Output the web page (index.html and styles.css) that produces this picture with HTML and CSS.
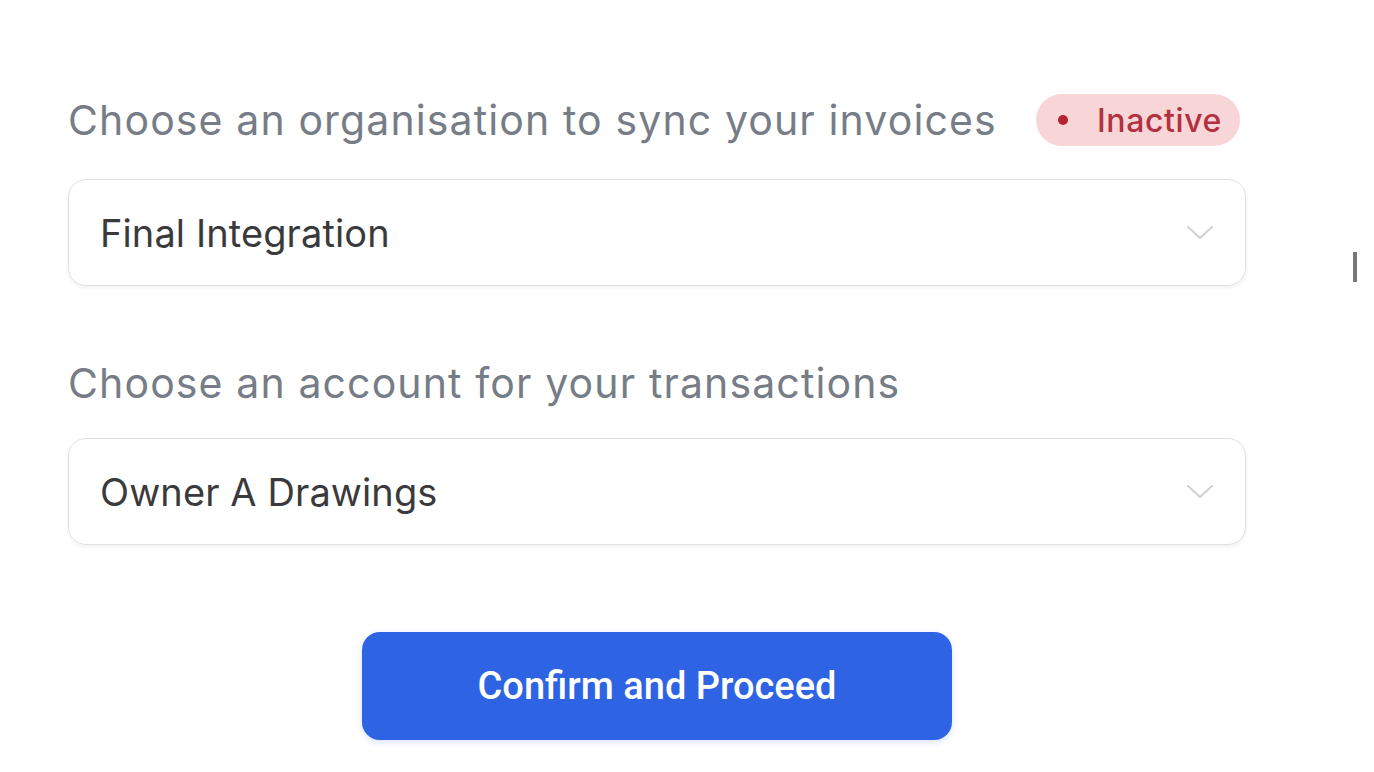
FILE: index.html
```html
<!DOCTYPE html>
<html>
<head>
<meta charset="utf-8">
<link rel="stylesheet" href="styles.css">
</head>
<body>
<div class="page">
  <div class="form">
    <div class="label-row">
      <span class="label">Choose an organisation to sync your invoices</span>
      <span class="badge"><span class="dot"></span>Inactive</span>
    </div>
    <div class="select">
      <span class="value">Final Integration</span>
      <svg class="chev" width="30" height="18" viewBox="0 0 30 18"><path d="M3 3 L15 14 L27 3" fill="none" stroke="#d2d2d6" stroke-width="2.2" stroke-linecap="round" stroke-linejoin="round"/></svg>
    </div>
    <div class="label-row second">
      <span class="label">Choose an account for your transactions</span>
    </div>
    <div class="select">
      <span class="value">Owner A Drawings</span>
      <svg class="chev" width="30" height="18" viewBox="0 0 30 18"><path d="M3 3 L15 14 L27 3" fill="none" stroke="#d2d2d6" stroke-width="2.2" stroke-linecap="round" stroke-linejoin="round"/></svg>
    </div>
    <div class="actions">
      <button class="btn">Confirm and Proceed</button>
    </div>
  </div>
  <div class="caret"></div>
</div>
</body>
</html>
```
FILE: styles.css
```css
html, body {
  margin: 0;
  padding: 0;
  background: #ffffff;
}
.page {
  position: relative;
  width: 1374px;
  height: 772px;
  overflow: hidden;
  font-family: Inter, "Noto Sans", sans-serif;
}
.form {
  width: 1178px;
  padding: 94px 0 0 68px;
  display: flex;
  flex-direction: column;
}
.label-row {
  display: flex;
  align-items: center;
  justify-content: space-between;
  height: 52px;
  padding-right: 6px;
}
.label-row.second {
  margin-top: 74px;
  height: 46px;
}
.label {
  font-size: 41px;
  color: #767d86;
  letter-spacing: 1.12px;
}
.badge {
  display: flex;
  align-items: center;
  height: 52px;
  padding: 0 18px 0 22px;
  background: #f8d6d7;
  border-radius: 26px;
  color: #b33040;
  font-size: 32px;
  font-weight: 500;
  letter-spacing: 0.6px;
}
.dot {
  width: 10px;
  height: 10px;
  border-radius: 50%;
  background: #b8232f;
  margin-right: 29px;
}
.select {
  margin-top: 33px;
  height: 107px;
  border: 1.5px solid #e0e0e3;
  border-radius: 18px;
  box-shadow: 0 2px 4px rgba(0,0,0,0.06);
  display: flex;
  align-items: center;
  justify-content: space-between;
  padding: 0 30px 0 31px;
  box-sizing: border-box;
}
.label-row.second + .select {
  margin-top: 32px;
}
.value {
  font-size: 38px;
  color: #3a3a3c;
  letter-spacing: 0.1px;
}
.chev {
  display: block;
}
.actions {
  display: flex;
  justify-content: center;
  margin-top: 87px;
}
.btn {
  width: 590px;
  height: 108px;
  border: none;
  border-radius: 18px;
  background: #2e63e4;
  color: #ffffff;
  font-family: Roboto, "Noto Sans", sans-serif;
  font-size: 38px;
  font-weight: 500;
  box-shadow: 0 2px 6px rgba(46,99,228,0.2);
}
.caret {
  position: absolute;
  left: 1353px;
  top: 252px;
  width: 4px;
  height: 30px;
  background: #555;
  opacity: 0.8;
}
```
